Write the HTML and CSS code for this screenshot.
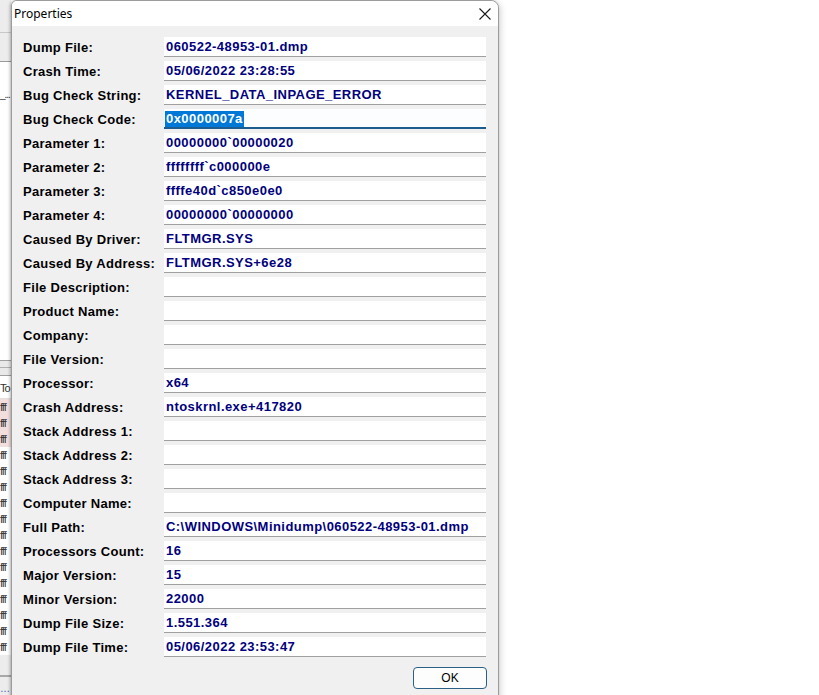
FILE: index.html
```html
<!DOCTYPE html>
<html>
<head>
<meta charset="utf-8">
<link rel="stylesheet" href="styles.css">
</head>
<body>
<div class="screen">
  <div class="bgapp">
    <div class="bg-top"><div class="bg-top-line"></div></div>
    <div class="bg-white"><div class="bg-dots">_...</div></div>
    <div class="bg-hdr"><div class="bg-hdr-line"></div></div>
    <div class="bg-col">To</div>
    <div class="bg-row pink">fff</div>
    <div class="bg-row pink">fff</div>
    <div class="bg-row pink">fff</div>
    <div class="bg-row">fff</div>
    <div class="bg-row">fff</div>
    <div class="bg-row">fff</div>
    <div class="bg-row">fff</div>
    <div class="bg-row">fff</div>
    <div class="bg-row">fff</div>
    <div class="bg-row">fff</div>
    <div class="bg-row">fff</div>
    <div class="bg-row">fff</div>
    <div class="bg-row">fff</div>
    <div class="bg-row">fff</div>
    <div class="bg-row">fff</div>
    <div class="bg-row">fff</div>
    <div class="bg-bottom"><div class="bg-bottom-line"></div><div class="bg-blue">…</div></div>
  </div>
  <div class="dialog">
    <div class="titlebar">
      <span class="title">Properties</span>
      <svg class="close" width="12" height="12" viewBox="0 0 12 12"><path d="M0.5 0.5 L11.5 11.5 M11.5 0.5 L0.5 11.5" stroke="#1a1a1a" stroke-width="1.1" fill="none"/></svg>
    </div>
    <div class="body">
      <div class="rows">
        <div class="label">Dump File:</div><div class="field">060522-48953-01.dmp</div>
        <div class="label">Crash Time:</div><div class="field">05/06/2022 23:28:55</div>
        <div class="label">Bug Check String:</div><div class="field">KERNEL_DATA_INPAGE_ERROR</div>
        <div class="label">Bug Check Code:</div><div class="field focused"><span class="sel">0x0000007a</span></div>
        <div class="label">Parameter 1:</div><div class="field">00000000`00000020</div>
        <div class="label">Parameter 2:</div><div class="field">ffffffff`c000000e</div>
        <div class="label">Parameter 3:</div><div class="field">ffffe40d`c850e0e0</div>
        <div class="label">Parameter 4:</div><div class="field">00000000`00000000</div>
        <div class="label">Caused By Driver:</div><div class="field">FLTMGR.SYS</div>
        <div class="label">Caused By Address:</div><div class="field">FLTMGR.SYS+6e28</div>
        <div class="label">File Description:</div><div class="field"></div>
        <div class="label">Product Name:</div><div class="field"></div>
        <div class="label">Company:</div><div class="field"></div>
        <div class="label">File Version:</div><div class="field"></div>
        <div class="label">Processor:</div><div class="field">x64</div>
        <div class="label">Crash Address:</div><div class="field">ntoskrnl.exe+417820</div>
        <div class="label">Stack Address 1:</div><div class="field"></div>
        <div class="label">Stack Address 2:</div><div class="field"></div>
        <div class="label">Stack Address 3:</div><div class="field"></div>
        <div class="label">Computer Name:</div><div class="field"></div>
        <div class="label">Full Path:</div><div class="field">C:\WINDOWS\Minidump\060522-48953-01.dmp</div>
        <div class="label">Processors Count:</div><div class="field">16</div>
        <div class="label">Major Version:</div><div class="field">15</div>
        <div class="label">Minor Version:</div><div class="field">22000</div>
        <div class="label">Dump File Size:</div><div class="field">1.551.364</div>
        <div class="label">Dump File Time:</div><div class="field">05/06/2022 23:53:47</div>
      </div>
      <div class="footer"><button class="ok">OK</button></div>
    </div>
  </div>
</div>
</body>
</html>
```

FILE: styles.css
```css
html, body {
  margin: 0;
  padding: 0;
  background: #ffffff;
  overflow: hidden;
}
.screen {
  display: flex;
  width: 819px;
  height: 695px;
  overflow: hidden;
  font-family: "Liberation Sans", Arial, sans-serif;
}
/* background application sliver */
.bgapp {
  width: 11px;
  flex: none;
  display: flex;
  flex-direction: column;
  overflow: hidden;
  background: #ffffff;
  font-size: 12px;
  color: #222;
}
.bg-top {
  height: 61px;
  background: #ececec;
  border-bottom: 1px solid #9a9a9a;
  flex: none;
}
.bg-top-line {
  height: 32px;
  border-bottom: 1px solid #c8c8c8;
}
.bg-white {
  height: 298px;
  flex: none;
  background: #ffffff;
}
.bg-dots {
  margin-top: 27px;
  font-size: 10px;
  color: #333;
  letter-spacing: -1px;
  white-space: nowrap;
}
.bg-hdr {
  height: 14px;
  flex: none;
  background: #e9e9e9;
  border-top: 1px solid #a0a0a0;
  border-bottom: 1px solid #a0a0a0;
}
.bg-hdr-line {
  height: 6px;
  border-bottom: 1px solid #b0b0b0;
}
.bg-col {
  height: 22px;
  flex: none;
  line-height: 24px;
  font-size: 11px;
  letter-spacing: -1px;
  color: #333;
  border-bottom: 1px solid #e0e0e0;
}
.bg-row {
  height: 16px;
  flex: none;
  line-height: 16px;
  font-size: 11px;
  color: #333;
  letter-spacing: -1px;
}
.bg-row.pink {
  background: #f3dede;
}
.bg-bottom {
  flex: 1;
  background: #ececec;
  padding-top: 20px;
}
.bg-bottom-line {
  height: 2px;
  background: #a8a8a8;
}
.bg-blue {
  margin-top: 6px;
  color: #3a58c8;
  font-size: 10px;
}
/* dialog */
.dialog {
  width: 486px;
  flex: none;
  height: 720px;
  border: 1px solid #9c9c9c;
  border-top-right-radius: 8px;
  border-top-left-radius: 6px;
  box-shadow: -1px 0 3px rgba(0,0,0,0.25), 2px 2px 6px rgba(0,0,0,0.15);
  background: #f0f0f0;
  display: flex;
  flex-direction: column;
  overflow: hidden;
  position: relative;
  z-index: 1;
}
.titlebar {
  height: 25px;
  flex: none;
  background: #ffffff;
  display: flex;
  align-items: center;
  justify-content: space-between;
  padding: 0 7px 0 2px;
}
.title {
  font-family: "Noto Sans", "Open Sans", sans-serif;
  font-size: 12px;
  color: #000;
  margin-top: -1px;
}
.close {
  display: block;
}
.body {
  padding: 11px 12px 0 10px;
}
.rows {
  display: grid;
  grid-template-columns: 142px 322px;
  grid-auto-rows: 20px;
  row-gap: 4px;
}
.label {
  font-size: 13px;
  font-weight: bold;
  color: #000;
  line-height: 21px;
  letter-spacing: 0.3px;
  white-space: nowrap;
  padding-left: 1px;
}
.field {
  box-sizing: border-box;
  height: 20px;
  background: #ffffff;
  border-bottom: 1px solid #a0a0a0;
  padding-left: 2px;
  padding-top: 1px;
  font-size: 13px;
  font-weight: bold;
  color: #000080;
  line-height: 18px;
  letter-spacing: 0.45px;
  white-space: nowrap;
  overflow: hidden;
}
.field.focused {
  border-bottom: 2px solid #1c5d90;
  background: #fbfdfe;
  padding-left: 1px;
  padding-top: 2px;
  line-height: 15px;
}
.sel {
  display: inline-block;
  background: #0078d7;
  color: #ffffff;
  padding: 0 1px 0 1px;
  line-height: 16px;
}
.footer {
  display: flex;
  justify-content: flex-end;
  padding-top: 10px;
}
.ok {
  width: 74px;
  height: 22px;
  margin-right: -1px;
  border: 1px solid #2a5f86;
  border-radius: 4px;
  background: #fdfdfd;
  font-family: "Liberation Sans", Arial, sans-serif;
  font-size: 12px;
  color: #000;
  padding: 0;
}
```
